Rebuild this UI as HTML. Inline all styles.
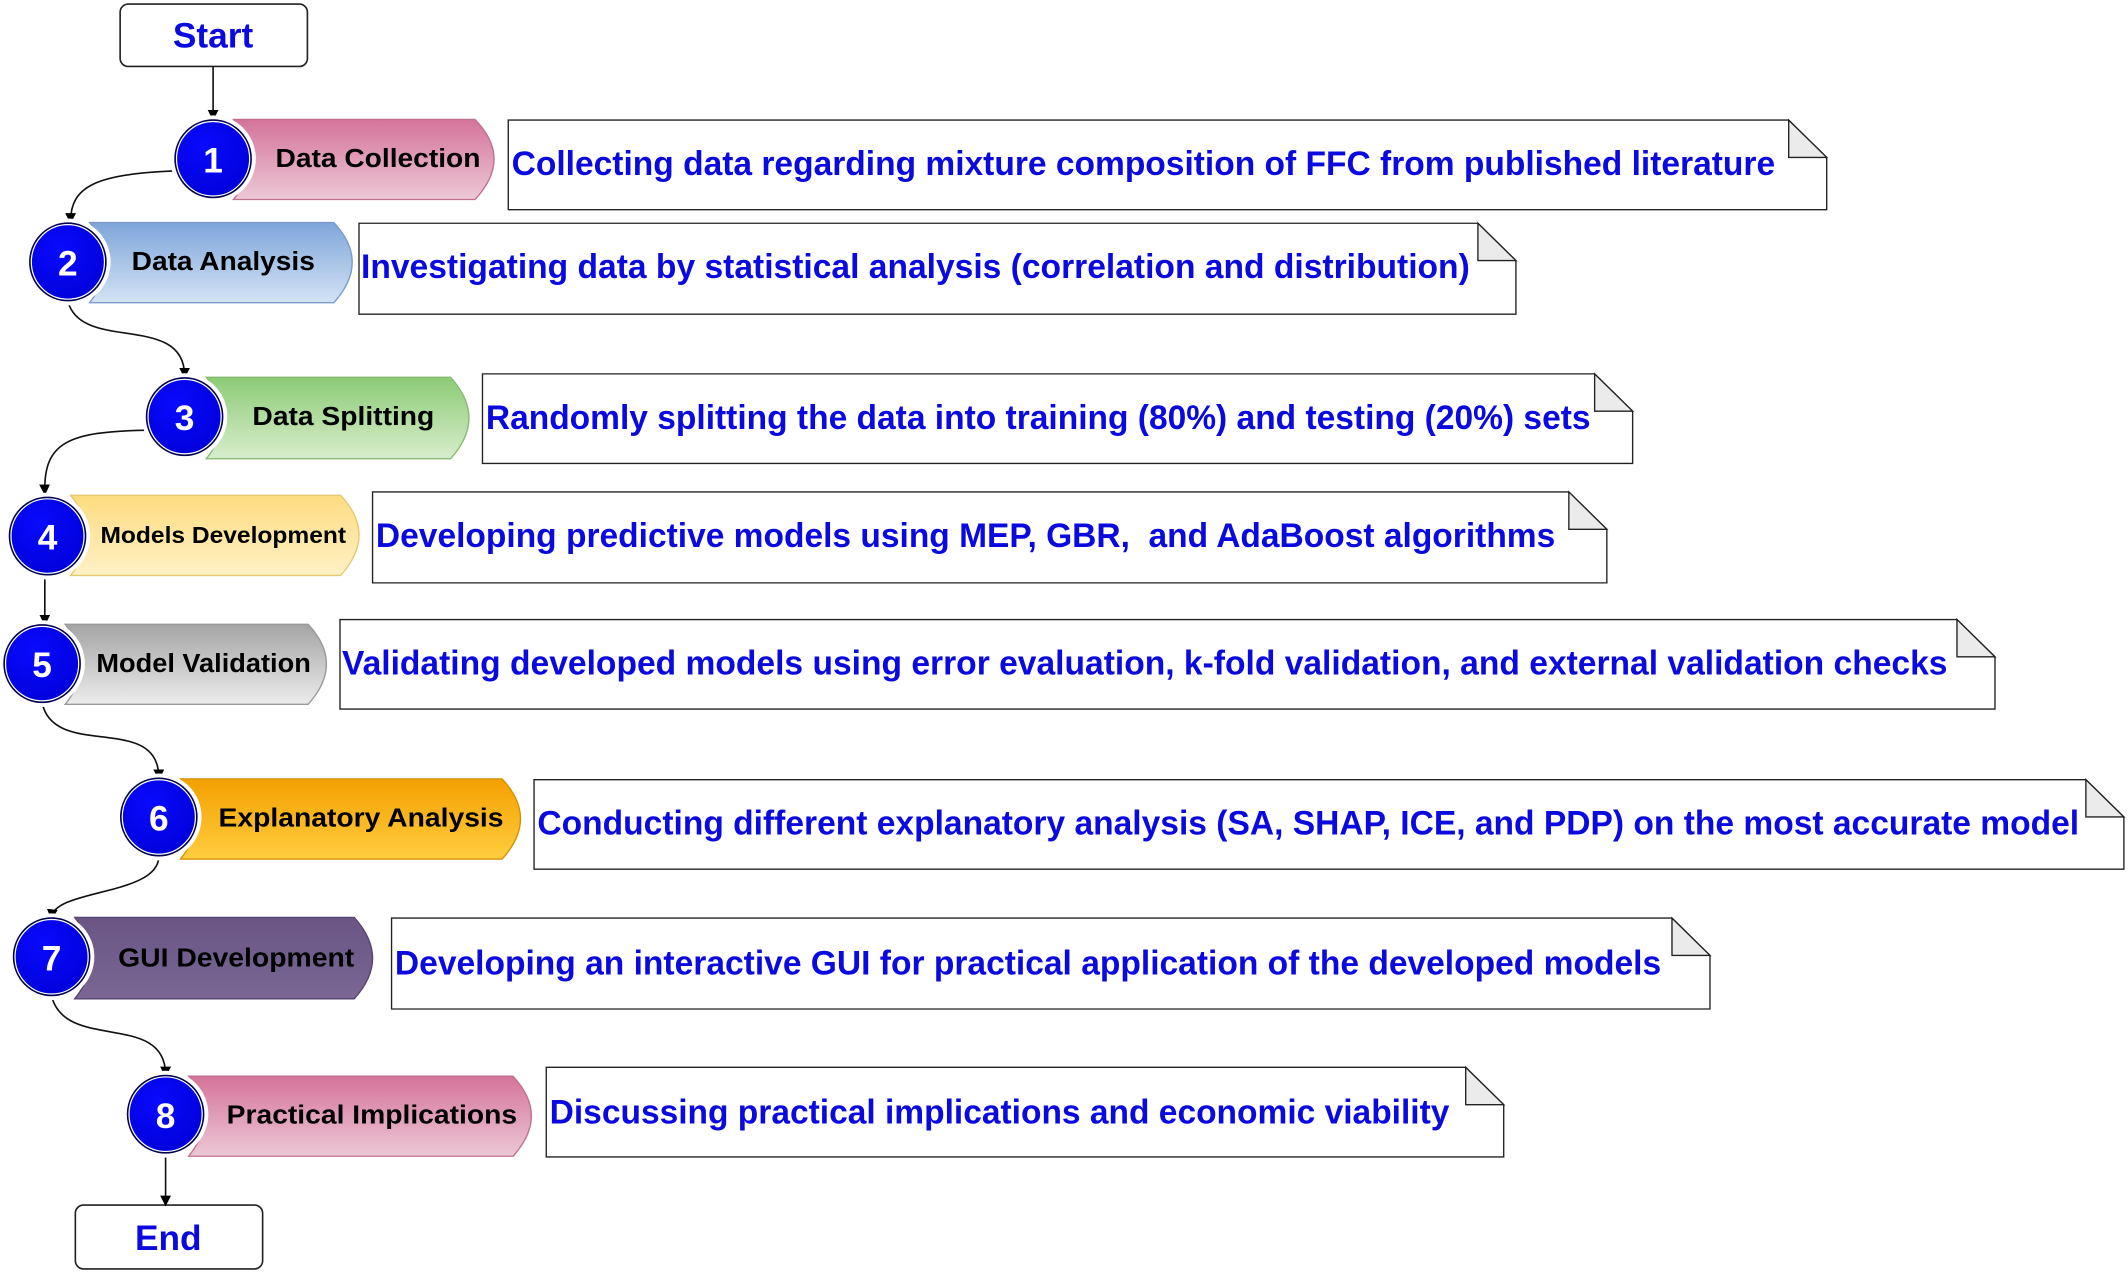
<!DOCTYPE html>
<html><head><meta charset="utf-8"><style>html,body{margin:0;padding:0;background:#fff}svg{display:block}</style></head><body>
<svg width="2128" height="1275" viewBox="0 0 1568 939.5" xmlns="http://www.w3.org/2000/svg" font-family="'Liberation Sans', Arial, sans-serif" font-weight="bold">
<defs>
<marker id="ah" markerWidth="8" markerHeight="8" refX="6" refY="4" orient="auto" markerUnits="userSpaceOnUse"><path d="M0,0 L8,4 L0,8 Z" fill="#000"/></marker>
<radialGradient id="cg" cx="40%" cy="35%" r="70%"><stop offset="0" stop-color="#0a0aff"/><stop offset="1" stop-color="#0000d8"/></radialGradient>
<linearGradient id="g1" x1="0" y1="0" x2="0" y2="1"><stop offset="0" stop-color="#d5739a"/><stop offset="1" stop-color="#ecc8d6"/></linearGradient>
<linearGradient id="g2" x1="0" y1="0" x2="0" y2="1"><stop offset="0" stop-color="#7ea5da"/><stop offset="1" stop-color="#d4e3f5"/></linearGradient>
<linearGradient id="g3" x1="0" y1="0" x2="0" y2="1"><stop offset="0" stop-color="#8ccb76"/><stop offset="1" stop-color="#d8edcc"/></linearGradient>
<linearGradient id="g4" x1="0" y1="0" x2="0" y2="1"><stop offset="0" stop-color="#fddc80"/><stop offset="1" stop-color="#fff1c6"/></linearGradient>
<linearGradient id="g5" x1="0" y1="0" x2="0" y2="1"><stop offset="0" stop-color="#a4a4a4"/><stop offset="1" stop-color="#ececec"/></linearGradient>
<linearGradient id="g6" x1="0" y1="0" x2="0" y2="1"><stop offset="0" stop-color="#f4a000"/><stop offset="1" stop-color="#ffcd40"/></linearGradient>
<linearGradient id="g7" x1="0" y1="0" x2="0" y2="1"><stop offset="0" stop-color="#6a5584"/><stop offset="1" stop-color="#7a6794"/></linearGradient>
<linearGradient id="g8" x1="0" y1="0" x2="0" y2="1"><stop offset="0" stop-color="#d5739a"/><stop offset="1" stop-color="#ecc8d6"/></linearGradient>
</defs>

<rect x="88.5" y="3" width="138" height="46" rx="6" fill="#fff" stroke="#222" stroke-width="1.2"/>
<text x="157" y="35" font-size="26" fill="#0a0ae0" text-anchor="middle">Start</text>
<rect x="55.5" y="888" width="138" height="47" rx="6" fill="#fff" stroke="#222" stroke-width="1.2"/>
<text x="124" y="921" font-size="26" fill="#0a0ae0" text-anchor="middle">End</text>

<g fill="none" stroke="#111" stroke-width="1.2" marker-end="url(#ah)">
<path d="M157,49 L157,87"/>
<path d="M129,126 C70,128 52,138 52,163"/>
<path d="M50,222 C60,260 136,230 136,277"/>
<path d="M108,317 C50,318 32,326 33,363"/>
<path d="M33,424 L33,459"/>
<path d="M31,518 C40,560 117,525 117,573"/>
<path d="M117,631 C117,660 40,655 38,676"/>
<path d="M38,734 C48,775 122,745 122,792"/>
<path d="M122,850 L122,887"/>
</g>

<g stroke-width="1">
<path d="M172,88 L350,88 Q378,117 350,147 L172,147 Q196,117 172,88 Z" fill="url(#g1)" stroke="#c07090"/>
<path d="M66,164 L246,164 Q273,193 246,223 L66,223 Q90,193 66,164 Z" fill="url(#g2)" stroke="#7a9acc"/>
<path d="M152,278 L332,278 Q359,308 332,338 L152,338 Q176,308 152,278 Z" fill="url(#g3)" stroke="#86bb70"/>
<path d="M52,365 L251,365 Q278,394 251,424 L52,424 Q76,394 52,365 Z" fill="url(#g4)" stroke="#e6c870"/>
<path d="M48,460 L227,460 Q254,489 227,519 L48,519 Q72,489 48,460 Z" fill="url(#g5)" stroke="#999"/>
<path d="M133,574 L370,574 Q397,603 370,633 L133,633 Q157,603 133,574 Z" fill="url(#g6)" stroke="#d89000"/>
<path d="M55,676 L261,676 Q288,706 261,736 L55,736 Q79,706 55,676 Z" fill="url(#g7)" stroke="#554470"/>
<path d="M139,793 L378,793 Q405,822 378,852 L139,852 Q163,822 139,793 Z" fill="url(#g8)" stroke="#c07090"/>
</g>
<g font-size="19" fill="#000">
<text x="203" y="123" textLength="151" lengthAdjust="spacingAndGlyphs">Data Collection</text>
<text x="97" y="199" textLength="135" lengthAdjust="spacingAndGlyphs">Data Analysis</text>
<text x="186" y="313" textLength="134" lengthAdjust="spacingAndGlyphs">Data Splitting</text>
<text x="74" y="400" font-size="17" textLength="181" lengthAdjust="spacingAndGlyphs">Models Development</text>
<text x="71" y="495" textLength="158" lengthAdjust="spacingAndGlyphs">Model Validation</text>
<text x="161" y="609" textLength="210" lengthAdjust="spacingAndGlyphs">Explanatory Analysis</text>
<text x="87" y="712" textLength="174" lengthAdjust="spacingAndGlyphs">GUI Development</text>
<text x="167" y="828" textLength="214" lengthAdjust="spacingAndGlyphs">Practical Implications</text>
</g>

<g stroke="#fff" stroke-width="5" fill="url(#cg)">
<ellipse cx="157" cy="117" rx="29" ry="29.5"/>
<ellipse cx="50" cy="193" rx="29" ry="29.5"/>
<ellipse cx="136" cy="307" rx="29" ry="29.5"/>
<ellipse cx="35" cy="395" rx="29" ry="29.5"/>
<ellipse cx="31" cy="489" rx="29" ry="29.5"/>
<ellipse cx="117" cy="602" rx="29" ry="29.5"/>
<ellipse cx="38" cy="705" rx="29" ry="29.5"/>
<ellipse cx="122" cy="821" rx="29" ry="29.5"/>
</g>
<g stroke="#000050" stroke-width="1.2" fill="none">
<ellipse cx="157" cy="117" rx="28" ry="28.5"/>
<ellipse cx="50" cy="193" rx="28" ry="28.5"/>
<ellipse cx="136" cy="307" rx="28" ry="28.5"/>
<ellipse cx="35" cy="395" rx="28" ry="28.5"/>
<ellipse cx="31" cy="489" rx="28" ry="28.5"/>
<ellipse cx="117" cy="602" rx="28" ry="28.5"/>
<ellipse cx="38" cy="705" rx="28" ry="28.5"/>
<ellipse cx="122" cy="821" rx="28" ry="28.5"/>
</g>
<g font-size="26" fill="#fff" text-anchor="middle">
<text x="157" y="127">1</text><text x="50" y="203">2</text><text x="136" y="317">3</text><text x="35" y="405">4</text>
<text x="31" y="499">5</text><text x="117" y="612">6</text><text x="38" y="715">7</text><text x="122" y="831">8</text>
</g>

<g fill="#fff" stroke="#222" stroke-width="1">
<path d="M374.5,88.5 H1318 L1346,116 V154.5 H374.5 Z"/><path d="M1318,88.5 V116 H1346 Z" fill="#ebebeb"/>
<path d="M264.5,164.5 H1089 L1117,192 V231.5 H264.5 Z"/><path d="M1089,164.5 V192 H1117 Z" fill="#ebebeb"/>
<path d="M355.5,275.5 H1175 L1203,303 V341.5 H355.5 Z"/><path d="M1175,275.5 V303 H1203 Z" fill="#ebebeb"/>
<path d="M274.5,362.5 H1156 L1184,390 V429.5 H274.5 Z"/><path d="M1156,362.5 V390 H1184 Z" fill="#ebebeb"/>
<path d="M250.5,456.5 H1442 L1470,484 V522.5 H250.5 Z"/><path d="M1442,456.5 V484 H1470 Z" fill="#ebebeb"/>
<path d="M393.5,574.5 H1537 L1565,602 V640.5 H393.5 Z"/><path d="M1537,574.5 V602 H1565 Z" fill="#ebebeb"/>
<path d="M288.5,676.5 H1232 L1260,704 V743.5 H288.5 Z"/><path d="M1232,676.5 V704 H1260 Z" fill="#ebebeb"/>
<path d="M402.5,786.5 H1080 L1108,814 V852.5 H402.5 Z"/><path d="M1080,786.5 V814 H1108 Z" fill="#ebebeb"/>
</g>
<g font-size="25" fill="#0a0ae0">
<text x="377" y="129" textLength="931" lengthAdjust="spacingAndGlyphs">Collecting data regarding mixture composition of FFC from published literature</text>
<text x="266" y="205" textLength="817" lengthAdjust="spacingAndGlyphs">Investigating data by statistical analysis (correlation and distribution)</text>
<text x="358" y="316" textLength="814" lengthAdjust="spacingAndGlyphs">Randomly splitting the data into training (80%) and testing (20%) sets</text>
<text x="277" y="403" textLength="869" lengthAdjust="spacingAndGlyphs">Developing predictive models using MEP, GBR,&#160; and AdaBoost algorithms</text>
<text x="252" y="497" textLength="1183" lengthAdjust="spacingAndGlyphs">Validating developed models using error evaluation, k-fold validation, and external validation checks</text>
<text x="396" y="615" textLength="1136" lengthAdjust="spacingAndGlyphs">Conducting different explanatory analysis (SA, SHAP, ICE, and PDP) on the most accurate model</text>
<text x="291" y="718" textLength="933" lengthAdjust="spacingAndGlyphs">Developing an interactive GUI for practical application of the developed models</text>
<text x="405" y="828" textLength="663" lengthAdjust="spacingAndGlyphs">Discussing practical implications and economic viability</text>
</g>
</svg>
</body></html>
